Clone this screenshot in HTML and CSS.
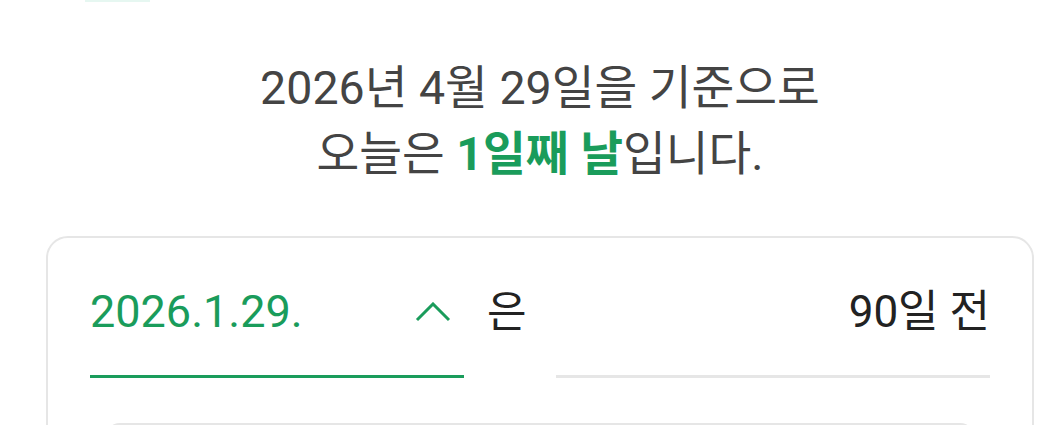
FILE: index.html
```html
<!DOCTYPE html>
<html lang="ko">
<head>
<meta charset="utf-8">
<link rel="stylesheet" href="styles.css">
</head>
<body>
<div class="page">
  <div class="top-hint"></div>
  <p class="summary">2026년 4월 29일을 기준으로<br>오늘은 <strong class="accent">1일째 날</strong>입니다.</p>
  <div class="card">
    <div class="row">
      <div class="field field-date">
        <span class="date">2026.1.29.</span>
        <svg class="chev" viewBox="0 0 36 20" width="36" height="20"><polyline points="2,18 18,2 34,18" fill="none" stroke="#1a9c5b" stroke-width="3"/></svg>
      </div>
      <span class="particle">은</span>
      <div class="field field-result">90일 전</div>
    </div>
    <div class="inner"></div>
  </div>
</div>
</body>
</html>
```

FILE: styles.css
```css
html, body {
  margin: 0;
  padding: 0;
  background: #ffffff;
}
body {
  font-family: Roboto, "Noto Sans CJK KR", sans-serif;
  overflow: hidden;
}
.page {
  margin-left: 46px;
  width: 988px;
}
.top-hint {
  margin-left: 39px;
  width: 65px;
  height: 2px;
  background: #e6f7f1;
}
.summary {
  margin: 53px 0 0;
  text-align: center;
  font-size: 46.5px;
  line-height: 66px;
  color: #444444;
}
.accent {
  color: #1a9c5b;
  font-weight: 700;
}
.card {
  margin-top: 49px;
  border: 2px solid #e6e6e6;
  border-radius: 22px;
  padding: 0 42px;
  height: 300px;
}
.row {
  display: flex;
  align-items: flex-start;
  font-size: 45px;
  line-height: 60px;
}
.field {
  padding: 44px 0 33px;
  border-bottom: 3px solid #e6e6e6;
}
.field-date {
  width: 374px;
  display: flex;
  align-items: center;
  justify-content: space-between;
  border-bottom-color: #1a9c5b;
  color: #1a9c5b;
}
.chev {
  margin-right: 13px;
}
.particle {
  margin-left: 23px;
  padding-top: 44px;
  font-size: 43px;
  color: #222;
}
.field-result {
  margin-left: 29px;
  flex: 1;
  text-align: right;
  color: #222;
  font-size: 44px;
}
.inner {
  margin: 45px 14px 0;
  height: 100px;
  border: 2px solid #e6e6e6;
  border-radius: 16px;
}
```
